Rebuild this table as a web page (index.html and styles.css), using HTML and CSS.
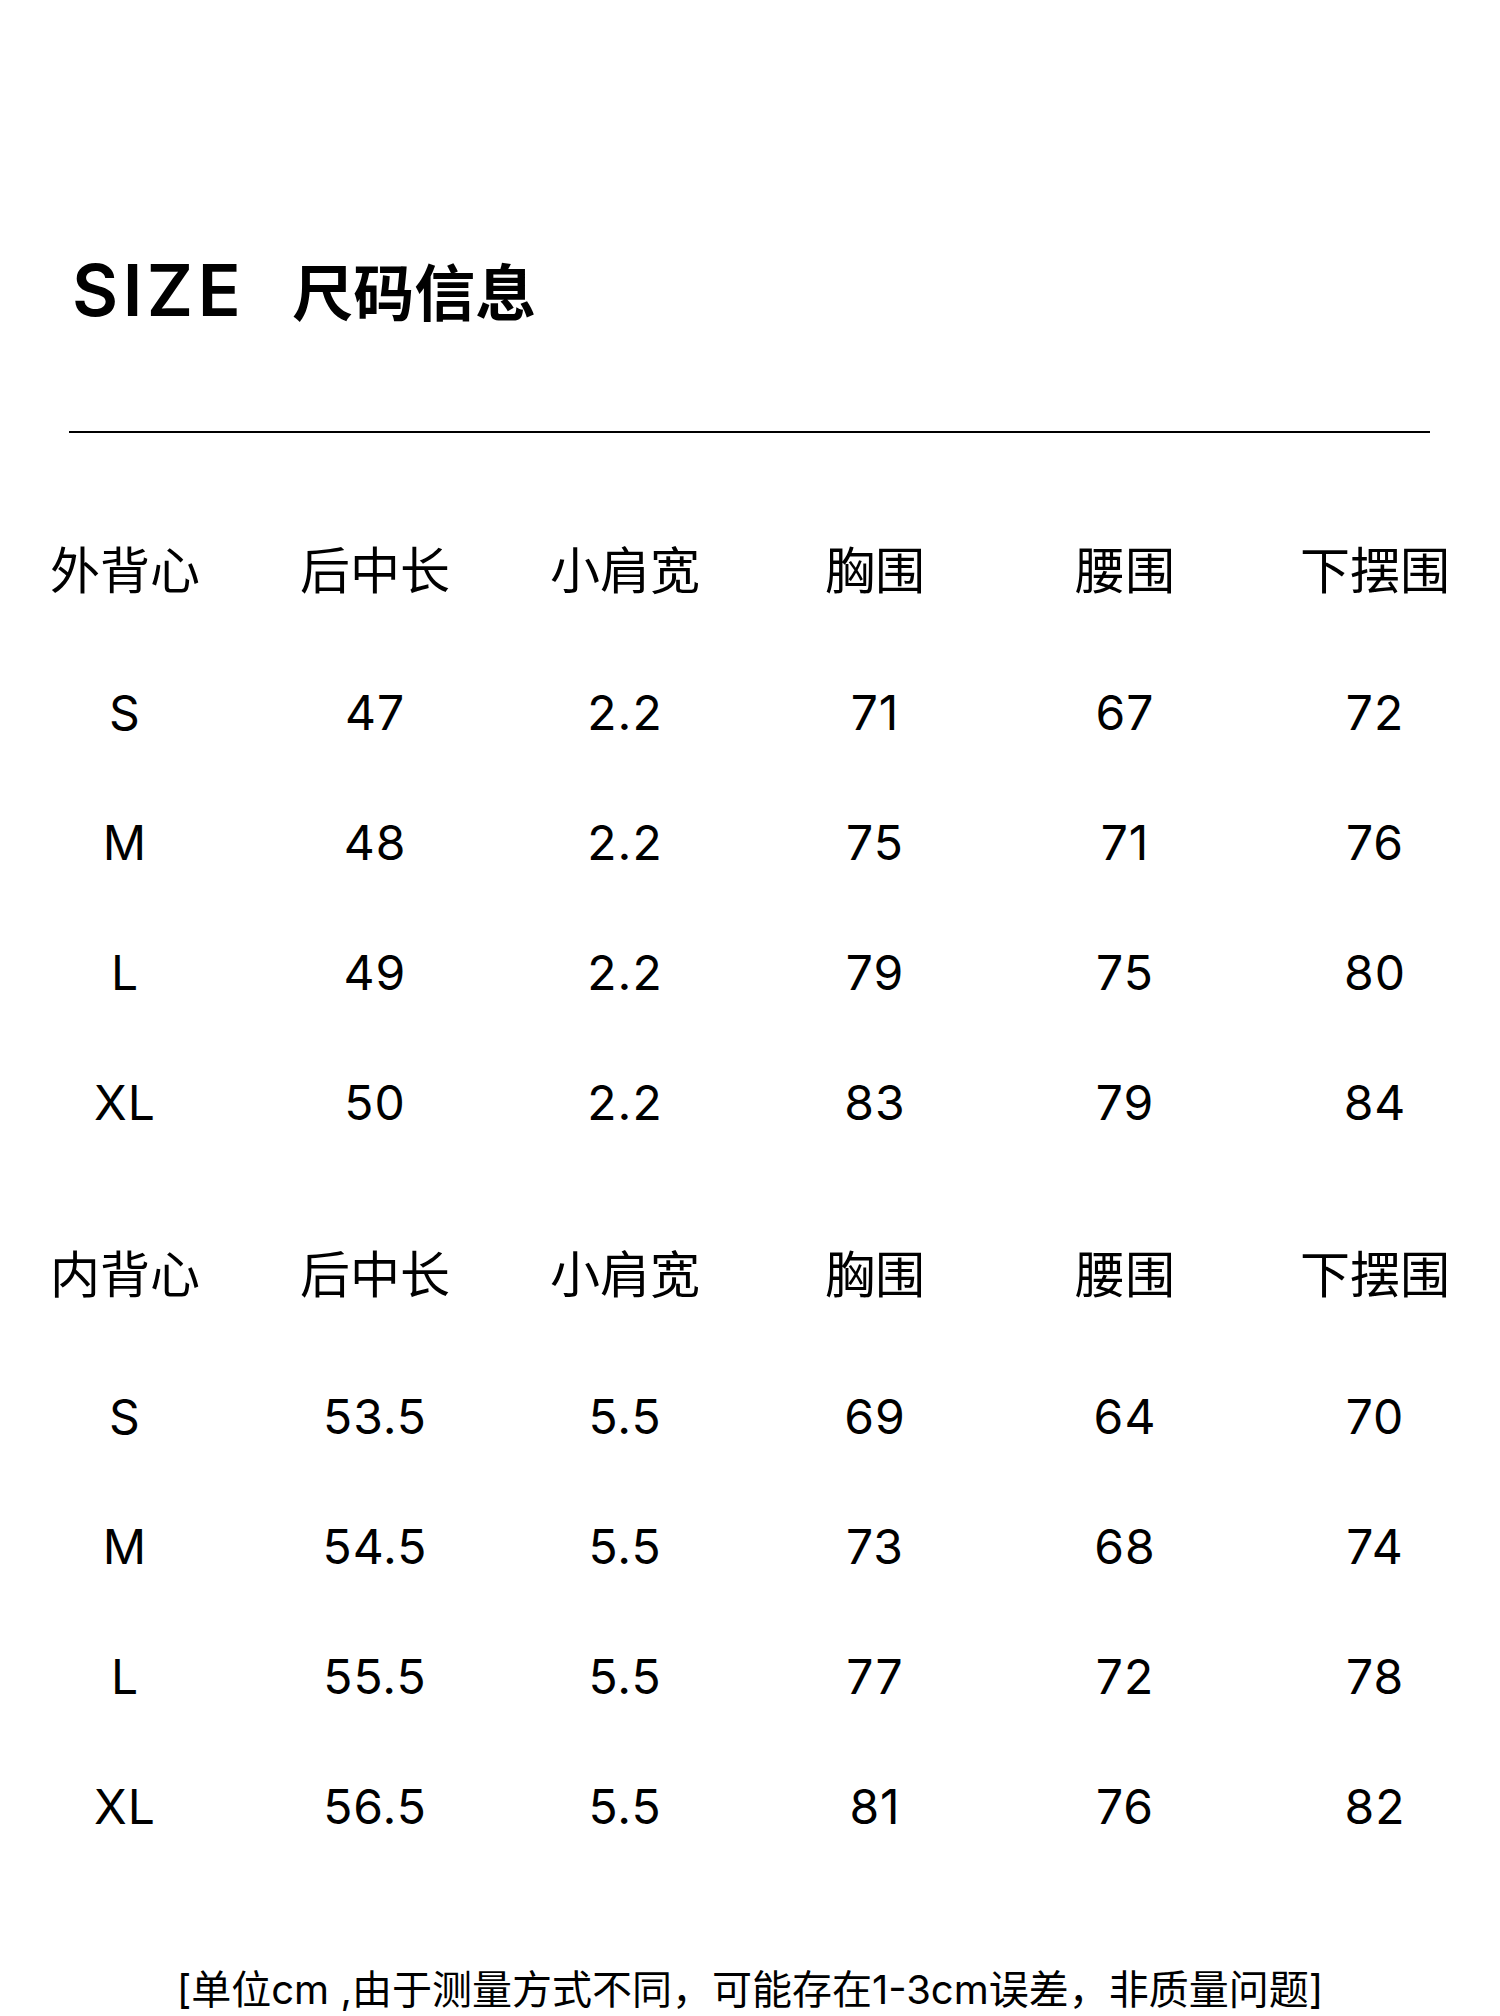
FILE: index.html
```html
<!DOCTYPE html>
<html lang="zh-CN">
<head>
<meta charset="utf-8">
<title>SIZE 尺码信息</title>
<link rel="stylesheet" href="styles.css">
</head>
<body>
<div class="page">
  <h1 class="title"><span class="title-en">SIZE</span><span class="title-cn">尺码信息</span></h1>
  <div class="rule"></div>

  <div class="table first">
    <div class="row head"><div>外背心</div><div>后中长</div><div>小肩宽</div><div>胸围</div><div>腰围</div><div>下摆围</div></div>
    <div class="row"><div>S</div><div>47</div><div>2.2</div><div>71</div><div>67</div><div>72</div></div>
    <div class="row"><div>M</div><div>48</div><div>2.2</div><div>75</div><div>71</div><div>76</div></div>
    <div class="row"><div>L</div><div>49</div><div>2.2</div><div>79</div><div>75</div><div>80</div></div>
    <div class="row"><div>XL</div><div>50</div><div>2.2</div><div>83</div><div>79</div><div>84</div></div>
  </div>

  <div class="table second">
    <div class="row head"><div>内背心</div><div>后中长</div><div>小肩宽</div><div>胸围</div><div>腰围</div><div>下摆围</div></div>
    <div class="row"><div>S</div><div>53.5</div><div>5.5</div><div>69</div><div>64</div><div>70</div></div>
    <div class="row"><div>M</div><div>54.5</div><div>5.5</div><div>73</div><div>68</div><div>74</div></div>
    <div class="row"><div>L</div><div>55.5</div><div>5.5</div><div>77</div><div>72</div><div>78</div></div>
    <div class="row"><div>XL</div><div>56.5</div><div>5.5</div><div>81</div><div>76</div><div>82</div></div>
  </div>

  <p class="note">[单位cm ,由于测量方式不同，可能存在1-3cm误差，非质量问题]</p>
</div>
</body>
</html>
```

FILE: styles.css
```css
html, body {
  margin: 0;
  padding: 0;
  background: #ffffff;
}

body {
  font-family: Inter, "Noto Sans CJK SC", sans-serif;
  color: #000000;
}

.page {
  width: 1500px;
  height: 2016px;
  overflow: hidden;
  padding-top: 250px;
  box-sizing: border-box;
}

.title {
  margin: 0;
  height: 80px;
  line-height: 80px;
  padding-left: 72px;
  display: flex;
  align-items: baseline;
}

.title-en {
  font-family: Inter, sans-serif;
  font-size: 71px;
  letter-spacing: 4.5px;
  font-weight: 600;
}

.title-cn {
  font-family: "Noto Sans CJK SC", sans-serif;
  font-size: 61px;
  font-weight: 700;
  margin-left: 47px;
}

.rule {
  margin: 101px 0 0 69px;
  width: 1361px;
  height: 2px;
  background: #000000;
}

.table.first {
  margin-top: 69px;
}

.table.second {
  margin-top: 38px;
}

.row {
  display: grid;
  grid-template-columns: repeat(6, 250px);
  height: 130px;
  align-items: center;
  justify-items: center;
  font-size: 48px;
  font-weight: 400;
  line-height: 60px;
  letter-spacing: 1px;
}

.row.head {
  margin-bottom: 16px;
  font-family: "Noto Sans CJK SC", sans-serif;
  font-size: 50px;
  line-height: 70px;
  letter-spacing: 0;
}

.note {
  margin: 88px 0 0 0;
  height: 60px;
  line-height: 60px;
  text-align: center;
  font-size: 40px;
  font-weight: 400;
  white-space: nowrap;
}
```
